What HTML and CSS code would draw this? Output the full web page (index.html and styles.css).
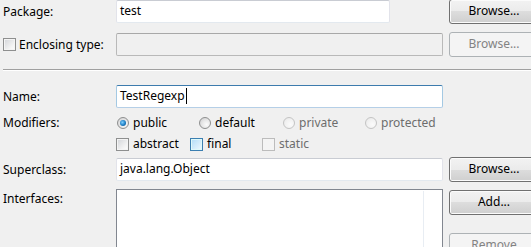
FILE: index.html
```html
<!DOCTYPE html>
<html lang="en">
<head>
    <meta charset="UTF-8">
    <title>New Java Class</title>
    <link rel="stylesheet" href="styles.css">
</head>
<body>
    <div class="form">
        <div class="row row-package">
            <div class="label">Package:</div>
            <div class="field field-short">test</div>
            <div class="button">Browse...</div>
        </div>

        <div class="row row-enclosing">
            <div class="label check-label">
                <span class="checkbox"></span>
                <span>Enclosing type:</span>
            </div>
            <div class="field field-disabled"></div>
            <div class="button button-disabled">Browse...</div>
        </div>

        <div class="separator"></div>

        <div class="row row-name">
            <div class="label">Name:</div>
            <div class="field field-focus"><span class="caret">TestRegexp</span></div>
            <div></div>
        </div>

        <div class="row row-mods">
            <div class="label">Modifiers:</div>
            <div class="options">
                <div class="option opt-public"><span class="radio radio-checked"></span>public</div>
                <div class="option opt-default"><span class="radio"></span>default</div>
                <div class="option opt-private disabled"><span class="radio"></span>private</div>
                <div class="option disabled"><span class="radio"></span>protected</div>
            </div>
            <div></div>
        </div>

        <div class="row row-checks">
            <div></div>
            <div class="options">
                <div class="option opt-abstract"><span class="checkbox"></span>abstract</div>
                <div class="option opt-final"><span class="checkbox checkbox-hover"></span>final</div>
                <div class="option disabled"><span class="checkbox"></span>static</div>
            </div>
            <div></div>
        </div>

        <div class="row row-super">
            <div class="label">Superclass:</div>
            <div class="field">java.lang.Object</div>
            <div class="button">Browse...</div>
        </div>

        <div class="row row-interfaces">
            <div class="label label-top">Interfaces:</div>
            <div class="list"><div class="list-col"></div></div>
            <div class="buttons">
                <div class="button">Add...</div>
                <div class="button button-disabled button-remove">Remove</div>
            </div>
        </div>
    </div>
</body>
</html>
```

FILE: styles.css
```css
html, body {
    margin: 0;
    padding: 0;
    width: 531px;
    height: 247px;
    overflow: hidden;
    background-color: #f0f0f0;
}

body {
    font-family: 'Noto Sans', 'Liberation Sans', sans-serif;
    font-size: 12px;
    line-height: 16px;
    color: #000;
}

.form {
    padding-left: 3px;
    width: 540px;
}

.row {
    display: grid;
    grid-template-columns: 107px 327px 90px;
    column-gap: 6px;
    align-items: center;
    height: 25px;
}

.row-package {
    margin-top: -1px;
}

.row-enclosing {
    margin-top: 8px;
}

.row-name {
    margin-top: 13px;
}

.row-mods {
    margin-top: 6px;
    height: 16px;
}

.row-checks {
    margin-top: 5px;
    height: 16px;
}

.row-super {
    margin-top: 5px;
}

.row-interfaces {
    margin-top: 7px;
    height: auto;
    align-items: start;
}

.label {
    white-space: nowrap;
}

.label-top {
    padding-top: 2px;
}

.check-label {
    display: flex;
    align-items: center;
    gap: 3px;
}

.separator {
    margin-top: 12px;
    height: 0;
    border-top: 1px solid #a0a0a0;
    border-bottom: 1px solid #ffffff;
}

/* text boxes */
.field {
    box-sizing: border-box;
    height: 23px;
    padding: 2px 3px;
    background-color: #fff;
    border: 1px solid #e2e3ea;
    border-top-color: #c9ccd3;
    border-bottom-color: #e3e9ef;
    border-radius: 2px;
    white-space: nowrap;
}

.field-short {
    width: 274px;
}

.field-disabled {
    background-color: #f0f0f0;
    border-color: #b9b9b9;
    border-top-color: #a8a8a8;
}

.field-focus {
    border-color: #a4c9e3;
    border-top-color: #3d7bad;
    border-bottom-color: #b5cfe7;
}

.caret {
    display: inline-block;
    height: 16px;
    border-right: 1px solid #000;
    padding-right: 1px;
}

.list {
    box-sizing: border-box;
    height: 70px;
    background-color: #fff;
    border: 1px solid #828790;
    padding-top: 1px;
}

.list-col {
    width: 306px;
    height: 100%;
    border-right: 1px solid #e8edf3;
}

/* push buttons */
.button {
    box-sizing: border-box;
    height: 25px;
    line-height: 22px;
    text-align: center;
    border: 1px solid #707070;
    border-radius: 3px;
    background: linear-gradient(#f2f2f2 0%, #ebebeb 50%, #dddddd 50%, #cfcfcf 100%);
    box-shadow: inset 0 0 0 1px #fbfbfb;
}

.button-disabled {
    color: #838383;
    border-color: #adb2b5;
    background: #f4f4f4;
    box-shadow: none;
}

.buttons {
    padding-top: 1px;
}

.button-remove {
    margin-top: 18px;
}

/* radios and check boxes */
.options {
    display: flex;
    align-items: center;
    white-space: nowrap;
}

.option {
    display: flex;
    align-items: center;
    gap: 4px;
}

.option.disabled {
    color: #6d6d6d;
}

.opt-public { width: 82px; margin-left: 1px; }
.opt-default { width: 84px; }
.opt-private { width: 82px; }
.opt-abstract { width: 74px; }
.opt-final { width: 72px; }

.checkbox {
    box-sizing: border-box;
    display: inline-block;
    width: 13px;
    height: 13px;
    border: 1px solid #8e8f8f;
    background: linear-gradient(135deg, #d2d4d8 0%, #f4f4f4 70%, #fdfdfd 100%);
    box-shadow: inset 0 0 0 1px #f4f4f4;
    flex: none;
}

.checkbox-hover {
    border-color: #3c7fb1;
    background: linear-gradient(135deg, #b1dcf7 0%, #dff2fd 75%, #eef9ff 100%);
    box-shadow: inset 0 0 0 1px #def9fa;
}

.disabled .checkbox {
    border-color: #bcbcbc;
    background: #f4f4f4;
    box-shadow: none;
}

.radio {
    box-sizing: border-box;
    display: inline-block;
    width: 12px;
    height: 12px;
    border-radius: 50%;
    border: 1px solid #8e8f8f;
    background: radial-gradient(circle at 65% 65%, #fbfbfb 0%, #e6e6e6 50%, #c9cacc 100%);
    flex: none;
    position: relative;
}

.radio-checked::after {
    content: "";
    position: absolute;
    left: 2px;
    top: 2px;
    width: 6px;
    height: 6px;
    border-radius: 50%;
    background: radial-gradient(circle at 40% 40%, #7fd0ff 0%, #1c7dc4 55%, #0b4a7e 100%);
}

.disabled .radio {
    border-color: #c4c4c4;
    background: radial-gradient(circle at 65% 65%, #fbfbfb 0%, #f0f0f0 60%, #e2e2e2 100%);
}
```
